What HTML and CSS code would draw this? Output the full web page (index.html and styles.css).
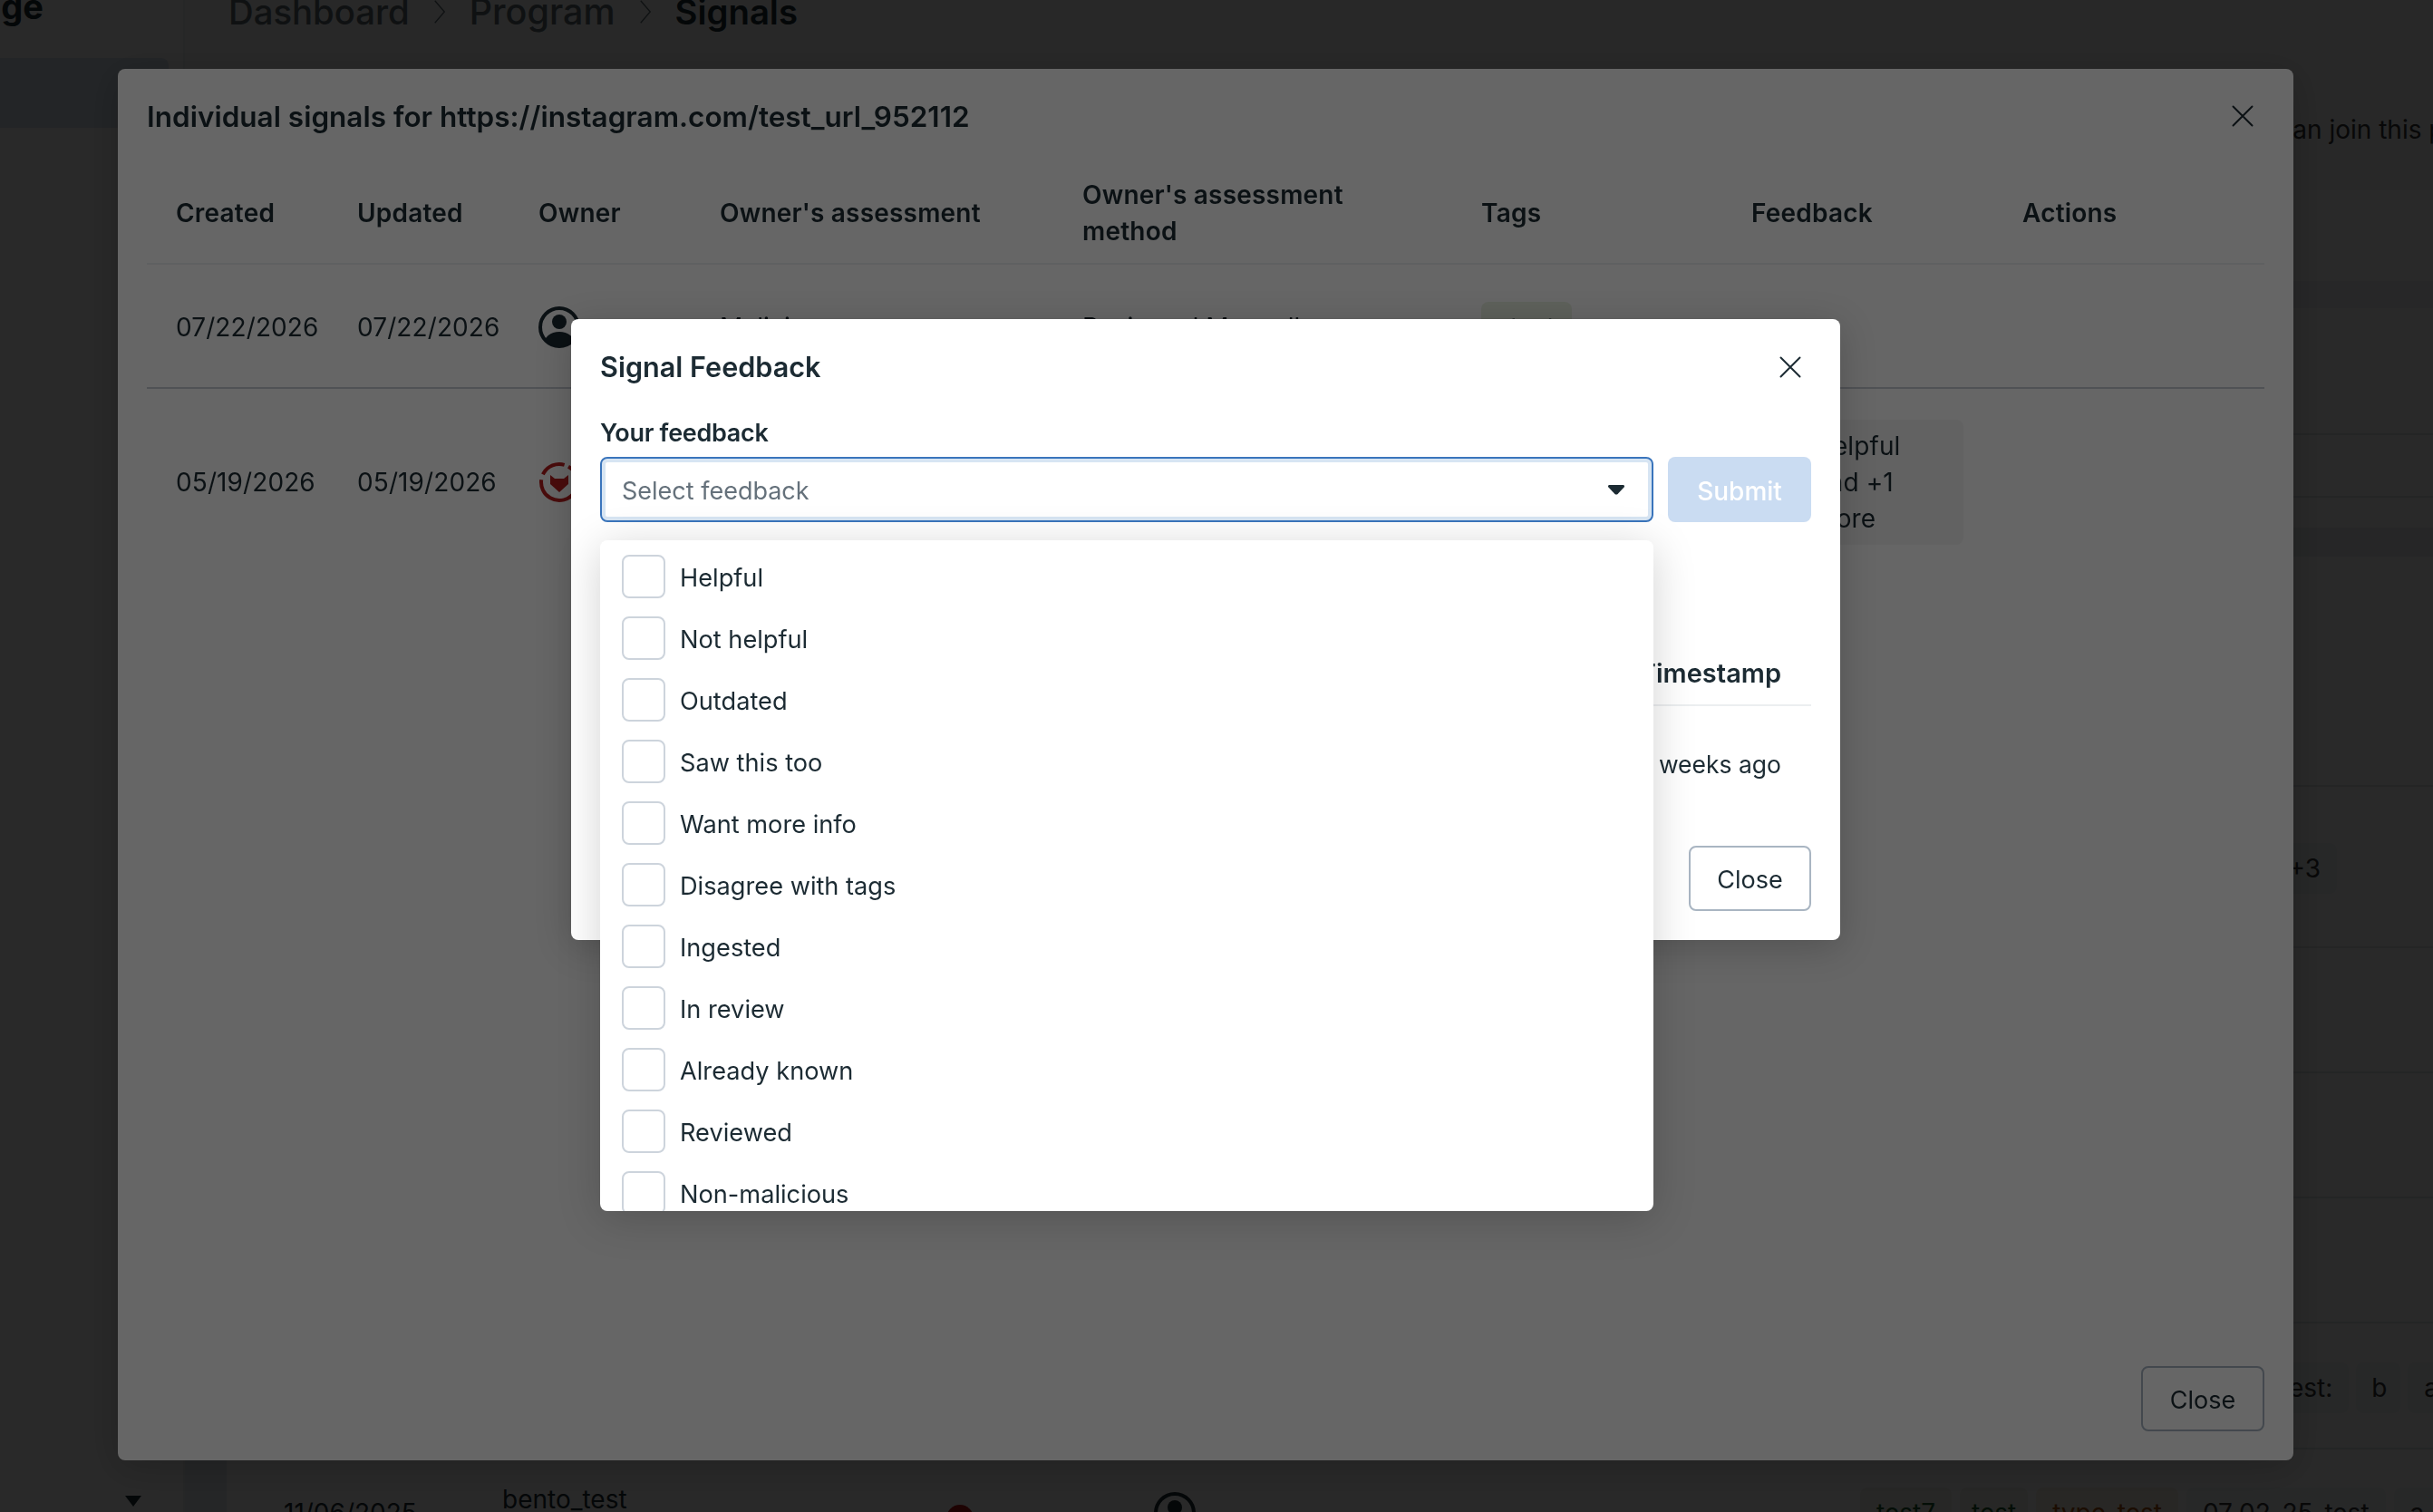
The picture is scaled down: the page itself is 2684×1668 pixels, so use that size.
FILE: index.html
```html
<!DOCTYPE html>
<html lang="en">
<head>
<meta charset="utf-8">
<title>Signals</title>
<link rel="stylesheet" href="styles.css">
</head>
<body>
<div class="page">
  <aside class="sidebar">
    <div class="side-title">Manage</div>
    <div class="side-item"></div>
    <div class="side-caret"></div>
  </aside>
  <main class="main">
    <section class="top">
      <nav class="crumbs">
        <span class="crumb">Dashboard</span>
        <svg class="crumb-sep" viewBox="0 0 16 32"><path d="M2 2l12 14L2 30"/></svg>
        <span class="crumb crumb-mid">Program</span>
        <svg class="crumb-sep" viewBox="0 0 16 32"><path d="M2 2l12 14L2 30"/></svg>
        <span class="crumb crumb-now">Signals</span>
      </nav>
      <p class="intro">can join this program</p>
    </section>
    <div class="band band-a"></div>
    <div class="band band-b"></div>
    <div class="band band-c line"></div>
    <div class="band band-d line"></div>
    <div class="band band-e"></div>
    <div class="band band-f"></div>
    <div class="band band-g line"></div>
    <div class="band band-h line"><span class="bg-tag">+3</span></div>
    <div class="band band-i line"></div>
    <div class="band band-i line"></div>
    <div class="band band-i line"></div>
    <div class="band band-j line">
      <span class="bg-tag">test:</span><span class="bg-tag bg-tag-b">b</span><span class="bg-tag">a</span>
    </div>
    <div class="last-row">
      <div class="last-stripe"></div>
      <div></div>
      <div class="last-date">11/06/2025</div>
      <div class="last-name">bento_test</div>
      <svg class="last-dot" viewBox="0 0 30 30"><circle cx="15" cy="15" r="15"/></svg>
      <svg class="avatar" viewBox="0 0 46 46"><use href="#person"/></svg>
      <div class="last-tags">
        <span class="bg-tag tag-green">test7</span>
        <span class="bg-tag tag-green tag-tight">test</span>
        <span class="bg-tag tag-orange">type_test</span>
        <span class="bg-tag">07_02_25_test</span>
        <span class="bg-tag">a</span>
      </div>
    </div>
  </main>
</div>

<svg class="defs" width="0" height="0">
  <defs>
    <symbol id="person" viewBox="0 0 46 46">
      <clipPath id="ring"><circle cx="23" cy="23" r="21"/></clipPath>
      <circle cx="23" cy="23" r="21" fill="none" stroke="currentColor" stroke-width="4"/>
      <circle cx="23" cy="17" r="8" fill="currentColor"/>
      <path clip-path="url(#ring)" d="M5 46c0-12 8-18 18-18s18 6 18 18z" fill="currentColor"/>
    </symbol>
    <symbol id="close" viewBox="0 0 24 24">
      <path d="M1.5 1.5l21 21M22.500 1.500l-21 21" fill="none" stroke="currentColor" stroke-width="2" stroke-linecap="round"/>
    </symbol>
  </defs>
</svg>

<div class="overlay overlay-outer">
  <div class="modal modal-outer">
    <header class="outer-head">
      <h2 class="outer-title">Individual signals for https://instagram.com/test_url_952112</h2>
      <svg class="x x-outer"><use href="#close"/></svg>
    </header>
    <table class="signals">
      <colgroup>
        <col class="c200"><col class="c200"><col class="c200"><col class="c400"><col class="c440"><col class="c298"><col class="c299"><col class="c299">
      </colgroup>
      <thead>
        <tr>
          <th>Created</th><th>Updated</th><th>Owner</th><th>Owner's assessment</th>
          <th>Owner's assessment<br>method</th><th>Tags</th><th>Feedback</th><th>Actions</th>
        </tr>
      </thead>
      <tbody>
        <tr class="row-one">
          <td>07/22/2026</td><td>07/22/2026</td>
          <td><svg class="avatar" viewBox="0 0 46 46"><use href="#person"/></svg></td>
          <td>Malicious</td><td>Reviewed Manually</td>
          <td><span class="tag-row">test</span></td><td></td><td></td>
        </tr>
        <tr class="row-two">
          <td>05/19/2026</td><td>05/19/2026</td>
          <td>
            <svg class="fox" viewBox="0 0 46 46">
              <circle cx="23" cy="23" r="20" fill="none" stroke="currentColor" stroke-width="4" stroke-dasharray="86 6 28 6" transform="rotate(-60 23 23)"/>
              <path d="M13 15l5 4h10l5-4v10l-10 9-10-9z" fill="currentColor"/>
            </svg>
          </td>
          <td></td><td></td><td></td>
          <td><span class="tag-feedback">Helpful<br>and +1<br>more</span></td><td></td>
        </tr>
      </tbody>
    </table>
    <footer class="outer-foot"><button class="btn btn-ghost-dim">Close</button></footer>

    <div class="overlay overlay-inner">
      <div class="modal modal-inner">
        <header class="inner-head">
          <h2 class="inner-title">Signal Feedback</h2>
          <svg class="x"><use href="#close"/></svg>
        </header>
        <div class="field-label">Your feedback</div>
        <div class="field-row">
          <div class="select">
            <span class="select-text">Select feedback</span>
            <svg class="select-caret" viewBox="0 0 18 11"><path d="M1.500 0h15c1.300 0 2 1.400 1.100 2.400l-7 7.600c-.9.800-2.300.8-3.200 0l-7-7.600C-.5 1.400.2 0 1.500 0z"/></svg>
          </div>
          <button class="btn btn-submit">Submit</button>
        </div>
        <div class="history">
          <div class="history-head">Timestamp</div>
          <div class="history-cell">2 weeks ago</div>
        </div>
        <footer class="inner-foot"><button class="btn btn-ghost">Close</button></footer>

        <ul class="popover">
          <li class="opt"><span class="box"></span>Helpful</li>
          <li class="opt"><span class="box"></span>Not helpful</li>
          <li class="opt"><span class="box"></span>Outdated</li>
          <li class="opt"><span class="box"></span>Saw this too</li>
          <li class="opt"><span class="box"></span>Want more info</li>
          <li class="opt"><span class="box"></span>Disagree with tags</li>
          <li class="opt"><span class="box"></span>Ingested</li>
          <li class="opt"><span class="box"></span>In review</li>
          <li class="opt"><span class="box"></span>Already known</li>
          <li class="opt"><span class="box"></span>Reviewed</li>
          <li class="opt"><span class="box"></span>Non-malicious</li>
        </ul>
      </div>
    </div>
  </div>
</div>
</body>
</html>
```

FILE: styles.css
```css
* { box-sizing: border-box; }
html, body { margin: 0; height: 100%; overflow: hidden; }
body {
  font-family: Inter, "Liberation Sans", sans-serif;
  font-size: 28px;
  color: #1c2b33;
  background: #fff;
}
.defs { display: block; height: 0; }

/* Page behind the dialogs */
.page { display: flex; width: 2684px; height: 1668px; overflow: hidden; }
.sidebar {
  width: 204px;
  flex: none;
  display: flex;
  flex-direction: column;
  border-right: 2px solid #eceff2;
}
.side-title {
  font-size: 38px;
  font-weight: 700;
  line-height: 46px;
  margin: -16px 0 0 -102px;
  white-space: nowrap;
}
.side-item { height: 77px; width: 186px; margin-top: 34px; background: #d8e4ee; border-radius: 0 8px 8px 0; }
.side-caret {
  margin: auto 0 6px 138px;
  width: 0;
  height: 0;
  border-left: 9px solid transparent;
  border-right: 9px solid transparent;
  border-top: 12px solid #1c2b33;
}
.main { flex: 1; min-width: 0; display: flex; flex-direction: column; }
.top { height: 210px; background: #f4f6f6; flex: none; }
.crumbs { display: flex; align-items: center; gap: 26px; margin: -14px 0 0 48px; height: 54px; font-size: 38.300px; }
.crumb { font-weight: 500; color: #5f6b73; }
.crumb-mid { font-size: 39.500px; }
.crumb-now { font-weight: 600; color: #1c2b33; }
.crumb-sep { width: 14px; height: 30px; fill: none; stroke: #5f6b73; stroke-width: 1.500; }
.intro { margin: 0; padding: 85px 0 0 2309px; line-height: 36px; white-space: nowrap; color: #333; }
.band { flex: none; display: flex; align-items: center; white-space: nowrap; }
.line { border-bottom: 2px solid #dfe3e6; }
.band-a { height: 100px; background: #ffffff; }
.band-b { height: 30px; background: #eef1f4; }
.band-c { height: 140px; }
.band-d { height: 69px; }
.band-e { height: 33px; }
.band-f { height: 32px; background: #e8edf2; }
.band-g { height: 254px; }
.band-h { height: 178px; justify-content: flex-end; padding: 4px 106px 0 0; }
.band-i { height: 138px; }
.band-j { height: 139px; gap: 8px; padding: 4px 0 0 2294px; }
.bg-tag {
  display: inline-flex;
  align-items: center;
  height: 56px;
  padding: 0 18px;
  border-radius: 8px;
  background: #f1f4f6;
  color: #333;
}
.bg-tag-b { padding: 0 17px; width: 49px; }
.tag-tight { padding: 0 13px; }
.last-row {
  flex: none;
  height: 140px;
  display: grid;
  grid-template-columns: 46px 63px 241px 490px 229px 779px;
  align-items: center;
  white-space: nowrap;
}
.last-row > .last-tags { grid-column: 7; }
.last-stripe { align-self: stretch; background: #e3ebf2; margin-top: 12px; }
.last-name { margin-top: -30px; }
.last-dot { width: 30px; height: 30px; fill: #b81818; margin: 12px 0 0 0; }
.last-tags { display: flex; gap: 9px; }
.tag-green { background: #eef3e9; color: #1d5a2c; }
.tag-orange { background: #f7eee4; color: #a8500c; }
.avatar { width: 46px; height: 46px; color: #1c2b33; display: block; }

/* Dialog layers */
.overlay { position: fixed; inset: 0; display: flex; background: rgba(0, 0, 0, .6); }
.overlay-outer { padding: 76px 154px 57px 130px; }
.overlay-inner { padding: 352px 654px 631px 630px; }
.modal { flex: 1; min-width: 0; background: #fff; border-radius: 8px; box-shadow: 0 8px 40px rgba(0, 0, 0, .2); }
.modal-outer { display: flex; flex-direction: column; padding: 0 32px; }
.modal-inner { position: relative; display: flex; flex-direction: column; padding: 0 32px; }

.x { width: 24px; height: 24px; flex: none; color: #1c2b33; }
.outer-head { display: flex; justify-content: space-between; align-items: center; height: 104px; padding: 0 12px 0 0; }
.outer-title { margin: 0; font-size: 31.500px; font-weight: 600; }
.signals { width: 2336px; table-layout: fixed; border-collapse: collapse; }
.c200 { width: 200px; } .c400 { width: 400px; } .c440 { width: 440px; } .c298 { width: 298px; } .c299 { width: 299px; }
.signals th { height: 111px; padding: 0 0 0 32px; text-align: left; font-weight: 600; line-height: 40px; letter-spacing: .2px; border-bottom: 2px solid #eef0f2; }
.signals td { padding: 0 0 0 32px; white-space: nowrap; letter-spacing: .1px; }
.row-one td { height: 137px; padding-top: 2px; border-bottom: 2px solid #c9ccd4; }
.row-two td { height: 206px; }
.tag-row {
  display: inline-block;
  height: 56px;
  width: 100px;
  padding-left: 32px;
  line-height: 56px;
  border-radius: 8px;
  background: #eaf3e4;
  vertical-align: middle;
}
.tag-feedback {
  display: inline-block;
  padding: 9px 70px 9px 69px;
  line-height: 40px;
  border-radius: 8px;
  background: #f5f5f6;
  vertical-align: middle;
}
.fox { width: 46px; height: 46px; color: #b82020; display: block; }
.outer-foot { display: flex; justify-content: flex-end; margin-top: auto; padding-bottom: 32px; }

.btn { font: inherit; height: 72px; padding: 3px 30px 0; border-radius: 8px; color: #1c2b33; background: #fff; }
.btn-ghost { border: 2px solid #a9b5c2; width: 135px; padding: 3px 0 0; font-size: 27px; }
.btn-ghost-dim { border: 2px solid #a9b5c2; width: 136px; padding: 3px 0 0; font-size: 27px; }
.btn-submit { width: 158px; padding: 3px 0 0; font-weight: 500; color: #fff; background: #cadcf2; border: 0; }

.inner-head { display: flex; justify-content: space-between; align-items: center; height: 105px; padding: 0 11px 0 0; }
.inner-title { margin: 0; font-size: 30.600px; font-weight: 600; }
.field-label { font-size: 27px; font-weight: 600; letter-spacing: -.3px; line-height: 34px; margin-top: 4px; }
.field-row { display: flex; gap: 16px; margin-top: 9px; }
.select {
  flex: 1;
  height: 72px;
  display: flex;
  align-items: center;
  justify-content: space-between;
  padding: 3px 30px 0 22px;
  border: 2px solid #3a75bc;
  border-radius: 8px;
  box-shadow: inset 0 0 0 4px #d7e5f3;
}
.select-text { color: #65717b; font-size: 27px; }
.select-caret { width: 18px; height: 11px; fill: #1c2b33; margin-top: -3px; }
.history { margin-top: 142px; font-size: 26.500px; }
.history-head { height: 61px; line-height: 50px; text-align: right; font-size: 29px; font-weight: 600; padding-right: 33px; border-bottom: 2px solid #eceef0; }
.history-cell { height: 100px; line-height: 128px; text-align: right; padding-right: 33px; }
.inner-foot { display: flex; justify-content: flex-end; margin-top: auto; padding-bottom: 32px; }

.popover {
  position: absolute;
  top: 244px;
  left: 32px;
  width: 1162px;
  height: 740px;
  margin: 0;
  padding: 6px 0 0;
  list-style: none;
  overflow: hidden;
  background: #fff;
  border-radius: 8px;
  box-shadow: 0 8px 48px rgba(0, 0, 0, .18);
}
.opt { display: flex; align-items: center; gap: 16px; height: 68px; padding: 3px 0 0 24px; font-size: 27.200px; flex: none; }
.box { width: 48px; height: 48px; margin-top: -3px; border: 2px solid #cdd4dc; border-radius: 8px; flex: none; }
```
